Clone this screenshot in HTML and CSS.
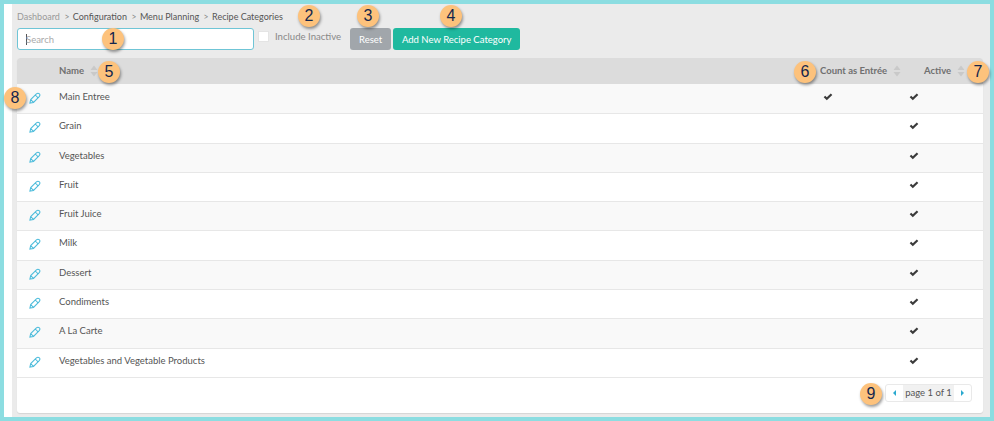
FILE: index.html
```html
<!DOCTYPE html>
<html lang="en">
<head>
<meta charset="utf-8">
<title>Recipe Categories</title>
<link rel="stylesheet" href="styles.css">
</head>
<body>
<svg class="defs" width="0" height="0" aria-hidden="true">
  <symbol id="pencil" viewBox="0 0 12 12">
    <path d="M.9 11.1 L1.7 7.6 L7.4 1.9 Q8.9 .6 10.4 1.8 Q11.5 3.2 10.2 4.7 L4.5 10.4 Z M6.3 3 L9.1 5.8 M1.7 7.6 L4.5 10.4" fill="none" stroke="currentColor" stroke-width="1.05"/>
  </symbol>
  <symbol id="check" viewBox="0 0 10 8">
    <path d="M.7 4.2 L2.2 2.8 L3.8 4.3 L7.8 .6 L9.3 2 L3.8 7.2 Z" fill="currentColor"/>
  </symbol>
  <symbol id="sort" viewBox="0 0 8 12">
    <path d="M4 .5 L7.5 5 H.5 Z M4 11.5 L.5 7 H7.5 Z" fill="currentColor"/>
  </symbol>
</svg>
<div class="frame">
  <nav class="crumbs">
    <span class="crumb-muted">Dashboard</span><span class="sep">&gt;</span><span>Configuration</span><span class="sep">&gt;</span><span>Menu Planning</span><span class="sep">&gt;</span><span>Recipe Categories</span>
  </nav>
  <div class="toolbar">
    <div class="search"><span class="caret"></span><span class="placeholder">Search</span></div>
    <label class="inactive"><span class="checkbox"></span>Include Inactive</label>
    <button class="btn btn-reset">Reset</button>
    <button class="btn btn-add">Add New Recipe Category</button>
  </div>
  <div class="card">
    <div class="row head">
      <div class="c-icon"></div>
      <div class="c-name">Name<svg class="sort"><use href="#sort"/></svg></div>
      <div class="c-count">Count as Entrée<svg class="sort"><use href="#sort"/></svg></div>
      <div class="c-active">Active<svg class="sort"><use href="#sort"/></svg></div>
    </div>
    <div class="row odd"><div class="c-icon"><svg class="pencil"><use href="#pencil"/></svg></div><div class="c-name">Main Entree</div><div class="c-count"><svg class="check"><use href="#check"/></svg></div><div class="c-active"><svg class="check"><use href="#check"/></svg></div></div>
    <div class="row"><div class="c-icon"><svg class="pencil"><use href="#pencil"/></svg></div><div class="c-name">Grain</div><div class="c-count"></div><div class="c-active"><svg class="check"><use href="#check"/></svg></div></div>
    <div class="row odd"><div class="c-icon"><svg class="pencil"><use href="#pencil"/></svg></div><div class="c-name">Vegetables</div><div class="c-count"></div><div class="c-active"><svg class="check"><use href="#check"/></svg></div></div>
    <div class="row"><div class="c-icon"><svg class="pencil"><use href="#pencil"/></svg></div><div class="c-name">Fruit</div><div class="c-count"></div><div class="c-active"><svg class="check"><use href="#check"/></svg></div></div>
    <div class="row odd"><div class="c-icon"><svg class="pencil"><use href="#pencil"/></svg></div><div class="c-name">Fruit Juice</div><div class="c-count"></div><div class="c-active"><svg class="check"><use href="#check"/></svg></div></div>
    <div class="row"><div class="c-icon"><svg class="pencil"><use href="#pencil"/></svg></div><div class="c-name">Milk</div><div class="c-count"></div><div class="c-active"><svg class="check"><use href="#check"/></svg></div></div>
    <div class="row odd"><div class="c-icon"><svg class="pencil"><use href="#pencil"/></svg></div><div class="c-name">Dessert</div><div class="c-count"></div><div class="c-active"><svg class="check"><use href="#check"/></svg></div></div>
    <div class="row"><div class="c-icon"><svg class="pencil"><use href="#pencil"/></svg></div><div class="c-name">Condiments</div><div class="c-count"></div><div class="c-active"><svg class="check"><use href="#check"/></svg></div></div>
    <div class="row odd"><div class="c-icon"><svg class="pencil"><use href="#pencil"/></svg></div><div class="c-name">A La Carte</div><div class="c-count"></div><div class="c-active"><svg class="check"><use href="#check"/></svg></div></div>
    <div class="row"><div class="c-icon"><svg class="pencil"><use href="#pencil"/></svg></div><div class="c-name">Vegetables and Vegetable Products</div><div class="c-count"></div><div class="c-active"><svg class="check"><use href="#check"/></svg></div></div>
    <div class="footer">
      <div class="pager">
        <span class="pg-btn"><i class="tri-left"></i></span>
        <span class="pg-label">page 1 of 1</span>
        <span class="pg-btn"><i class="tri-right"></i></span>
      </div>
    </div>
  </div>
  <span class="mark m1">1</span>
  <span class="mark m2">2</span>
  <span class="mark m3">3</span>
  <span class="mark m4">4</span>
  <span class="mark m5">5</span>
  <span class="mark m6">6</span>
  <span class="mark m7">7</span>
  <span class="mark m8">8</span>
  <span class="mark m9">9</span>
</div>
</body>
</html>
```

FILE: styles.css
```css
* { box-sizing: border-box; }
html, body { margin: 0; padding: 0; }
body { width: 994px; height: 421px; overflow: hidden; background: #fff; font-family: Lato, sans-serif; font-size: 10px; color: #555; }
.defs { position: absolute; }
.frame { position: relative; width: 994px; height: 421px; border: 4px solid #8cdde1; padding: 6px 7px 4px 13px; background: linear-gradient(to right, #fff 8px, #ebebeb 8px); }
.crumbs { display: flex; align-items: center; height: 13px; font-size: 9px; color: #555; }
.crumb-muted { color: #999; }
.sep { margin: 0 3.5px 0 4.5px; color: #888; font-size: 8.5px; }
.toolbar { display: flex; align-items: flex-start; margin-top: 5px; }
.search { width: 237px; height: 22px; background: #fff; border: 1px solid #6fc5d6; border-radius: 3px; display: flex; align-items: center; padding-left: 8px; font-size: 9.5px; color: #aaa; }
.caret { width: 1px; height: 11px; background: #555; }
.placeholder { margin-left: -1px; }
.inactive { display: flex; align-items: center; height: 16px; margin-left: 4px; font-size: 9.6px; color: #888; white-space: nowrap; }
.checkbox { width: 11px; height: 11px; background: #fff; border: 1px solid #e4e4e4; margin-right: 6px; }
.btn { height: 22px; border: 0; border-radius: 3px; color: #fff; font: 9.5px Lato, sans-serif; padding: 0; }
.btn-reset { width: 41px; margin-left: 9px; background: #a1a6ab; }
.btn-add { width: 127px; margin-left: 2px; background: #1fb99f; }
.card { margin-top: 8px; background: #fff; border-radius: 3px; box-shadow: 0 1px 1px #d5d5d5; height: 355px; }
.row { display: flex; align-items: flex-start; height: 29.3px; border-bottom: 1px solid #e7e7e7; font-size: 9.5px; color: #555; padding-top: 6px; }
.odd { background: #f9f9f9; }
.head { height: 27px; background: #dcdcdc; border-bottom: 1px solid #f9f9f9; font-weight: 700; color: #707070; padding-top: 7px; border-radius: 3px 3px 0 0; font-size: 9.5px; }
.c-icon { width: 42px; flex: none; padding-left: 12px; }
.c-name { flex: 1; }
.c-count { width: 89px; flex: none; }
.c-active { width: 74px; flex: none; }
.row .c-count .check { margin-left: 3px; }
.head .c-active { padding-left: 15px; }
.sort { width: 8px; height: 12px; margin-left: 6px; color: #c9c9c9; vertical-align: -3px; }
.pencil { width: 12px; height: 12px; color: #4dbcdb; margin-top: 1px; }
.check { width: 10px; height: 8px; color: #3b3b3b; margin-top: 2px; }
.footer { display: flex; justify-content: flex-end; padding: 6px 11px 0 0; }
.pager { display: flex; height: 18px; border: 1px solid #e9e9e9; border-radius: 3px; align-items: center; background: #fff; }
.pg-btn { width: 17px; height: 16px; display: flex; align-items: center; justify-content: center; }
.pg-label { height: 16px; line-height: 16px; width: 51px; text-align: center; background: #f1f1f1; font-size: 9.5px; color: #555; }
.tri-left { width: 0; height: 0; border: 3px solid transparent; border-left-width: 0; border-right: 3px solid #2aa9cf; }
.tri-right { width: 0; height: 0; border: 3px solid transparent; border-right-width: 0; border-left: 3px solid #2aa9cf; }
.mark { position: absolute; width: 22px; height: 22px; border-radius: 50%; background: #fdc27c; box-shadow: 1px 2px 3px rgba(0,0,0,.4); font: 16px/22px "Liberation Sans", sans-serif; color: #14264d; text-align: center; }
.m1 { left: 98px; top: 24px; }
.m2 { left: 294px; top: 1px; }
.m3 { left: 353px; top: 1px; }
.m4 { left: 436px; top: 1px; }
.m5 { left: 94px; top: 57px; }
.m6 { left: 790px; top: 57px; }
.m7 { left: 963px; top: 57px; }
.m8 { left: 0; top: 83px; }
.m9 { left: 856px; top: 379px; }
```
